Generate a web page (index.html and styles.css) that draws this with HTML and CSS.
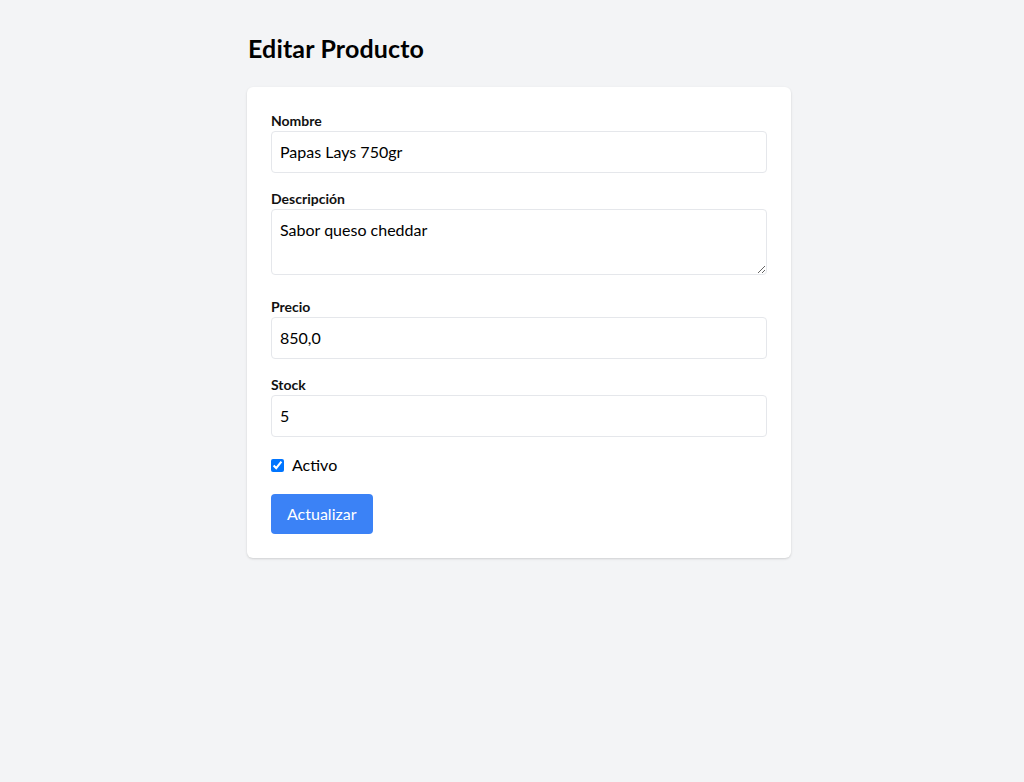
FILE: index.html
```html
<!DOCTYPE html>
<html lang="es">
<head>
<meta charset="utf-8">
<title>Editar Producto</title>
<link rel="stylesheet" href="styles.css">
</head>
<body>
<main class="container">
  <h1 class="title">Editar Producto</h1>
  <form class="card">
    <div class="field">
      <label class="label" for="nombre">Nombre</label>
      <input class="input" id="nombre" type="text" value="Papas Lays 750gr">
    </div>
    <div class="field">
      <label class="label" for="descripcion">Descripción</label>
      <textarea class="input textarea" id="descripcion" rows="2">Sabor queso cheddar</textarea>
    </div>
    <div class="field">
      <label class="label" for="precio">Precio</label>
      <input class="input" id="precio" type="text" value="850,0">
    </div>
    <div class="field">
      <label class="label" for="stock">Stock</label>
      <input class="input" id="stock" type="text" value="5">
    </div>
    <div class="check-row">
      <input class="checkbox" id="activo" type="checkbox" checked>
      <label class="check-label" for="activo">Activo</label>
    </div>
    <div class="actions">
      <button class="button" type="submit">Actualizar</button>
    </div>
  </form>
</main>
</body>
</html>
```
FILE: styles.css
```css
* { box-sizing: border-box; }
html, body { margin: 0; }
body {
  background: #f3f4f6;
  font-family: Lato, "Noto Sans", sans-serif;
  color: #111827;
  padding: 32px 0 0 14px;
  min-height: 782px;
}
.container {
  width: 544px;
  margin: 0 auto;
}
.title {
  margin: 0 0 23px;
  font-size: 25px;
  line-height: 32px;
  font-weight: 700;
  letter-spacing: 0.15px;
  color: #000;
  padding-left: 1px;
}
.card {
  background: #fff;
  border-radius: 6px;
  box-shadow: 0 1px 3px rgba(0,0,0,0.1), 0 1px 2px rgba(0,0,0,0.06);
  padding: 24px;
  display: flex;
  flex-direction: column;
  gap: 16px;
}
.field { display: flex; flex-direction: column; }
.label {
  font-size: 14px;
  line-height: 20px;
  font-weight: 700;
  color: #111;
}
.input {
  font-family: inherit;
  font-size: 16px;
  line-height: 24px;
  padding: 8px 8px;
  border: 1px solid #e5e7eb;
  border-radius: 4px;
  color: #000;
  width: 100%;
  background: #fff;
  outline: none;
}
.textarea {
  height: 66px;
  resize: vertical;
  display: block;
  margin-bottom: 6px;
}
.check-row {
  display: flex;
  align-items: center;
  height: 24px;
}
.checkbox {
  width: 13px;
  height: 13px;
  margin: 0 8px 0 0;
}
.check-label {
  font-size: 16px;
  line-height: 24px;
  color: #000;
}
.actions { padding-top: 1px; }
.button {
  font-family: inherit;
  font-size: 16px;
  line-height: 24px;
  padding: 8px 16px;
  border: none;
  border-radius: 4px;
  background: #3b82f6;
  color: #fff;
  cursor: pointer;
}
```
